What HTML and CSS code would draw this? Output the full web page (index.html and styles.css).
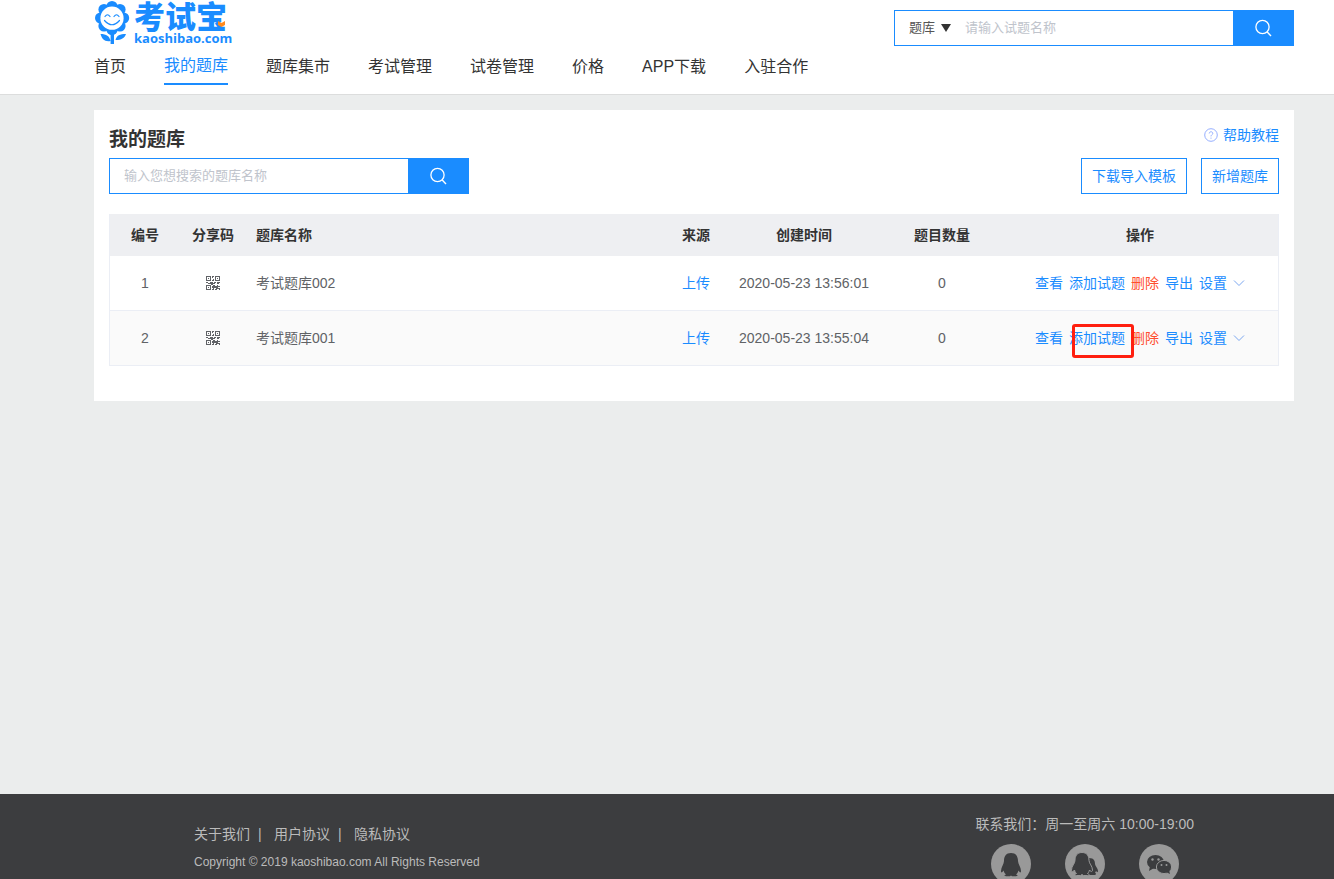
FILE: index.html
```html
<!DOCTYPE html>
<html lang="zh-CN">
<head>
<meta charset="utf-8">
<title>我的题库 - 考试宝</title>
<link rel="stylesheet" href="styles.css">
</head>
<body>
<svg class="symbols" aria-hidden="true">
  <symbol id="search" viewBox="0 0 18 18"><circle cx="7.500" cy="8" r="6.600" fill="none" stroke="currentColor" stroke-width="1.3"/><path d="M12 12.800 16 17" stroke="currentColor" stroke-width="1.4"/></symbol>
  <symbol id="chevron" viewBox="0 0 12 12"><path d="M1 3.5 6 8.5 11 3.5" fill="none" stroke="currentColor"/></symbol>
  <symbol id="qr" viewBox="0 0 14 14"><path fill="currentColor" fill-rule="evenodd" d="M0 0h5v5H0zM1 1v3h3V1zM9 0h5v5H9zM10 1v3h3V1zM0 9h5v5H0zM1 10v3h3v-3zM2 2h1v1H2zM11 2h1v1h-1zM2 11h1v1H2zM6 0h2v1H7v1H6zM7 3h1v2H6V4h1zM0 6h2v1h2V6h3v1h1V6h2v1H9v1H7v1H5V8H2V7H0zM11 6h3v1h-1v1h-2zM6 10h1V9h2v1h2V9h1v1h2v1h-2v1h2v2h-1v-1h-2v1H9v-1h1v-1H8v2H6v-1h1v-1H6z"/></symbol>
</svg>

<header class="header">
  <div class="wrap header-top">
    <a class="logo" href="#" aria-label="考试宝 kaoshibao.com">
      <svg class="logo-flower" viewBox="0 0 36 45" aria-hidden="true">
        <g fill="#1a8cff">
          <circle cx="18" cy="6.5" r="5.6"/><circle cx="26" cy="9.5" r="5.6"/><circle cx="29.6" cy="18" r="5.6"/><circle cx="26" cy="26" r="5.6"/><circle cx="18" cy="29.6" r="5.6"/><circle cx="10" cy="26" r="5.6"/><circle cx="6.600" cy="18" r="5.6"/><circle cx="10" cy="9.5" r="5.6"/>
          <path d="M16.600 33h3.4v11h-3.400zM6.500 34c6 0 9 2 10 7-6 1-8.500-2-10-7zM32 34c-6 0-9.500 1.500-10.500 6 6 0 9-2 10.500-6z"/>
        </g>
        <circle cx="18" cy="18.200" r="11.600" fill="#fff"/>
        <path d="M11 16.500q2.500-3.500 5 0M20 16.500q2.500-3.500 5 0M10.500 20.500q7.500 8.500 15 0" fill="none" stroke="#1a8cff" stroke-width="1.200" stroke-linecap="round"/>
      </svg>
      <span class="logo-words">
        <span class="logo-name">考试宝</span>
        <span class="logo-domain">kaoshibao.com</span>
        <svg class="logo-mark" viewBox="0 0 7 6" aria-hidden="true"><path fill="#ff8a1c" d="M0 0 3.500 2 7 0v4L3.500 6 0 4z"/></svg>
      </span>
    </a>
    <form class="search search-top">
      <label class="kind">
        <select class="kind-select" aria-label="搜索类型"><option>题库</option><option>试题</option></select>
        <svg class="kind-arrow" viewBox="0 0 10 8" aria-hidden="true"><path fill="#333" d="M0 0h10L5 8z"/></svg>
      </label>
      <input class="search-input" type="text" placeholder="请输入试题名称" aria-label="请输入试题名称">
      <button class="search-button" type="button" aria-label="搜索"><svg class="search-icon"><use href="#search"/></svg></button>
    </form>
  </div>
  <nav class="wrap nav">
    <a class="nav-link" href="#">首页</a>
    <a class="nav-link active" href="#">我的题库</a>
    <a class="nav-link" href="#">题库集市</a>
    <a class="nav-link" href="#">考试管理</a>
    <a class="nav-link" href="#">试卷管理</a>
    <a class="nav-link" href="#">价格</a>
    <a class="nav-link" href="#">APP下载</a>
    <a class="nav-link" href="#">入驻合作</a>
  </nav>
</header>

<main class="wrap main">
  <section class="panel">
    <div class="row">
      <h1 class="title">我的题库</h1>
      <a class="help" href="#"><svg class="help-icon" viewBox="0 0 14 14" aria-hidden="true"><circle cx="7" cy="7" r="6.300" fill="none" stroke="currentColor" stroke-width=".9"/><path d="M5.200 5.500C5.200 3.200 8.800 3.200 8.800 5.400 8.800 6.700 7 6.700 7 8.400M7 9.600v1.100" fill="none" stroke="currentColor" stroke-width=".9"/></svg>帮助教程</a>
    </div>
    <div class="row">
      <form class="search search-bank">
        <input class="search-input" type="text" placeholder="输入您想搜索的题库名称" aria-label="输入您想搜索的题库名称">
        <button class="search-button" type="button" aria-label="搜索"><svg class="search-icon"><use href="#search"/></svg></button>
      </form>
      <div class="buttons">
        <button class="button" type="button">下载导入模板</button>
        <button class="button" type="button">新增题库</button>
      </div>
    </div>
    <table class="table">
      <colgroup><col class="col-no"><col class="col-share"><col><col class="col-source"><col class="col-time"><col class="col-count"><col class="col-actions"></colgroup>
      <thead>
        <tr><th>编号</th><th>分享码</th><th class="name">题库名称</th><th>来源</th><th>创建时间</th><th>题目数量</th><th>操作</th></tr>
      </thead>
      <tbody>
        <tr>
          <td>1</td>
          <td><svg class="qr" role="img" aria-label="分享码"><use href="#qr"/></svg></td>
          <td class="name">考试题库002</td>
          <td><a class="link" href="#">上传</a></td>
          <td>2020-05-23 13:56:01</td>
          <td>0</td>
          <td><div class="actions"><a class="link" href="#">查看</a><a class="link" href="#">添加试题</a><a class="link danger" href="#">删除</a><a class="link" href="#">导出</a><button class="link more" type="button">设置<svg class="chevron"><use href="#chevron"/></svg></button></div></td>
        </tr>
        <tr>
          <td>2</td>
          <td><svg class="qr" role="img" aria-label="分享码"><use href="#qr"/></svg></td>
          <td class="name">考试题库001</td>
          <td><a class="link" href="#">上传</a></td>
          <td>2020-05-23 13:55:04</td>
          <td>0</td>
          <td><div class="actions"><a class="link" href="#">查看</a><a class="link marked" href="#">添加试题</a><a class="link danger" href="#">删除</a><a class="link" href="#">导出</a><button class="link more" type="button">设置<svg class="chevron"><use href="#chevron"/></svg></button></div></td>
        </tr>
      </tbody>
    </table>
  </section>
</main>

<footer class="footer">
  <div class="wrap footer-inner">
    <div class="about">
      <div class="about-links"><a href="#">关于我们</a><span class="bar">|</span><a href="#">用户协议</a><span class="bar">|</span><a href="#">隐私协议</a></div>
      <p class="copyright">Copyright © 2019 kaoshibao.com All Rights Reserved</p>
    </div>
    <div class="contact">
      <p class="hours">联系我们：周一至周六 10:00-19:00</p>
      <div class="socials">
        <a class="social" href="#" aria-label="QQ"><svg viewBox="0 0 40 40"><path fill="#3c3d3f" d="M20 9c-5 0-7 3.500-7 8 0 3-3 6-3 10 0 2 1 2 2.500-.5.500 2 1.500 3 2.500 4-2 .5-2 1.700 0 1.700h4l1-.7 1 .7h4c2 0 2-1.200 0-1.700 1-1 2-2 2.500-4C29 29 30 29 30 27c0-4-3-7-3-10 0-4.500-2-8-7-8z"/></svg></a>
        <a class="social" href="#" aria-label="QQ群"><svg viewBox="0 0 40 40"><path fill="#3c3d3f" d="M24 14c5 0 6 3 6 6 0 2 3 4 3 7 0 1.500-1 1.500-2 0l-1 2c2 .5 1 2-1 2h-6z"/><path fill="#3c3d3f" stroke="#999" d="M17 8.500c-5 0-7 3.500-7 8 0 3-3.500 5.500-3.500 9.500 0 2 1.500 2 3 0 .5 2 1 2.500 2 3.500-2 .5-2 2 0 2h4l1.500-1 1.500 1h4c2 0 2-1.500 0-2 1-1 1.500-1.500 2-3.500 1.500 2 3 2 3 0 0-4-3.500-6.500-3.500-9.500 0-4.500-2-8-7-8z"/></svg></a>
        <a class="social" href="#" aria-label="微信"><svg viewBox="0 0 40 40"><ellipse cx="16.500" cy="18" rx="8.500" ry="7" fill="#3c3d3f"/><path d="m11 22-1 5 5-3z" fill="#3c3d3f"/><ellipse cx="25" cy="23" rx="7.600" ry="6.600" fill="#3c3d3f" stroke="#999"/><path d="m27 28 4 2-1-4z" fill="#3c3d3f"/><g fill="#999"><circle cx="13.500" cy="15.500" r="1.200"/><circle cx="19.500" cy="15.500" r="1.200"/><circle cx="22.500" cy="21" r="1"/><circle cx="27.500" cy="21" r="1"/></g></svg></a>
      </div>
    </div>
  </div>
</footer>
</body>
</html>
```
FILE: styles.css
```css
* {
  box-sizing: border-box;
}

body {
  display: flex;
  flex-direction: column;
  height: 100vh;
  margin: 0;
  overflow: hidden;
  background: #ebeded;
  color: #606266;
  font: 14px/20px "Liberation Sans", "Noto Sans CJK SC", sans-serif;
}

a {
  color: inherit;
  text-decoration: none;
}

button,
input,
select {
  border: 0;
  padding: 0;
  background: none;
  font: inherit;
}

h1,
p {
  margin: 0;
}

.symbols {
  position: absolute;
  width: 0;
  height: 0;
}

.wrap {
  width: 100%;
  padding: 0 40px 0 94px;
}

.header {
  flex: none;
  border-bottom: 1px solid #dcdddd;
  background: #fff;
}

.header-top {
  display: flex;
  align-items: flex-start;
  justify-content: space-between;
  height: 46px;
}

.logo {
  display: flex;
  gap: 4px;
  color: #1a8cff;
}

.logo-flower {
  width: 36px;
  height: 45px;
}

.logo-words {
  display: flex;
  position: relative;
  flex-direction: column;
  padding-top: 3px;
}

.logo-name {
  font: 900 31px/29px "Liberation Sans", "Noto Sans CJK SC", sans-serif;
}

.logo-domain {
  font: 700 13px/13px "Open Sans", sans-serif;
}

.logo-mark {
  position: absolute;
  top: 21px;
  right: 7px;
  width: 7px;
  height: 6px;
}

.search {
  display: flex;
  height: 36px;
}

.search-top {
  width: 400px;
  margin-top: 10px;
  border-left: 1px solid #1a8cff;
}

.search-top .search-input {
  border-left: 0;
  padding-left: 8px;
}

.search-bank {
  width: 360px;
}

.search-input {
  flex: 1;
  min-width: 0;
  border: 1px solid #1a8cff;
  border-right: 0;
  padding-left: 14px;
  background: #fff;
  font-size: 13px;
}

.search-input::placeholder {
  color: #c0c4cc;
}

.search-button {
  display: flex;
  align-items: center;
  justify-content: center;
  width: 61px;
  background: #1a8cff;
  color: #fff;
}

.search-icon {
  width: 18px;
  height: 18px;
}

.kind {
  position: relative;
  width: 62px;
  border: solid #1a8cff;
  border-width: 1px 0;
}

.kind-select {
  width: 100%;
  height: 100%;
  padding-left: 14px;
  appearance: none;
  color: #555;
  font-size: 13px;
}

.kind-arrow {
  position: absolute;
  top: 13px;
  right: 6px;
  width: 10px;
  height: 8px;
  pointer-events: none;
}

.nav {
  display: flex;
  gap: 38px;
  height: 48px;
}

.nav-link {
  height: 39px;
  color: #333;
  font: 16px/42px "Liberation Sans", "Noto Sans CJK SC", sans-serif;
}

.nav-link.active {
  border-bottom: 2px solid #1a8cff;
  color: #1a8cff;
  line-height: 40px;
}

.main {
  flex: 1;
  padding-top: 15px;
}

.panel {
  padding: 15px 15px 35px;
  background: #fff;
}

.row {
  display: flex;
  justify-content: space-between;
}

.title {
  color: #333;
  font-size: 19px;
  line-height: 30px;
  margin-bottom: 3px;
}

.help {
  display: flex;
  align-items: center;
  gap: 5px;
  height: 20px;
  color: #1a8cff;
}

.help-icon {
  width: 14px;
  height: 14px;
  color: #8aa6ff;
}

.buttons {
  display: flex;
  gap: 14px;
}

.button {
  height: 36px;
  border: 1px solid #1a8cff;
  padding: 0 10px;
  color: #1a8cff;
}

.table {
  width: 100%;
  margin-top: 20px;
  border: 1px solid #ebeef5;
  border-top: 0;
  border-spacing: 0;
  table-layout: fixed;
}

.col-no { width: 70px; }
.col-share { width: 66px; }
.col-source { width: 60px; }
.col-time { width: 156px; }
.col-count { width: 120px; }
.col-actions { width: 276px; }

.table th,
.table td {
  padding: 0;
  text-align: center;
}

.table th {
  height: 42px;
  background: #eeeff2;
  color: #333;
}

.table td {
  height: 55px;
  border-bottom: 1px solid #ebeef5;
}

.table tr:last-child td {
  height: 54px;
  border-bottom: 0;
}

.table tbody tr:nth-child(2) {
  background: #fafafa;
}

.table .name {
  padding-left: 10px;
  text-align: left;
}

.qr {
  display: block;
  width: 14px;
  height: 14px;
  margin: 0 auto;
}

.link {
  color: #1a8cff;
}

.danger {
  color: #ff4d2f;
}

.actions {
  display: flex;
  justify-content: center;
  gap: 6px;
}

.more {
  display: flex;
  align-items: center;
  gap: 6px;
}

.chevron {
  width: 12px;
  height: 12px;
  color: #7ba7f0;
}

.marked {
  position: relative;
}

.marked::after {
  position: absolute;
  top: -4px;
  left: 3px;
  box-sizing: border-box;
  width: 62px;
  height: 34px;
  border: 3px solid #ff1f0f;
  border-radius: 3px;
  content: "";
}

.footer {
  flex: none;
  height: 85px;
  overflow: hidden;
  background: #3c3d3f;
  color: #bbb;
}

.footer-inner {
  display: flex;
  justify-content: space-between;
}

.about {
  padding: 30px 0 0 100px;
}

.about-links {
  display: flex;
}

.bar {
  width: 24px;
  padding-left: 8px;
}

.copyright {
  margin-top: 8px;
  font-size: 12px;
}

.contact {
  padding: 20px 100px 0 0;
}

.socials {
  display: flex;
  justify-content: center;
  gap: 34px;
  margin-top: 10px;
}

.social {
  width: 40px;
  height: 40px;
  border-radius: 50%;
  background: #999;
}
```
